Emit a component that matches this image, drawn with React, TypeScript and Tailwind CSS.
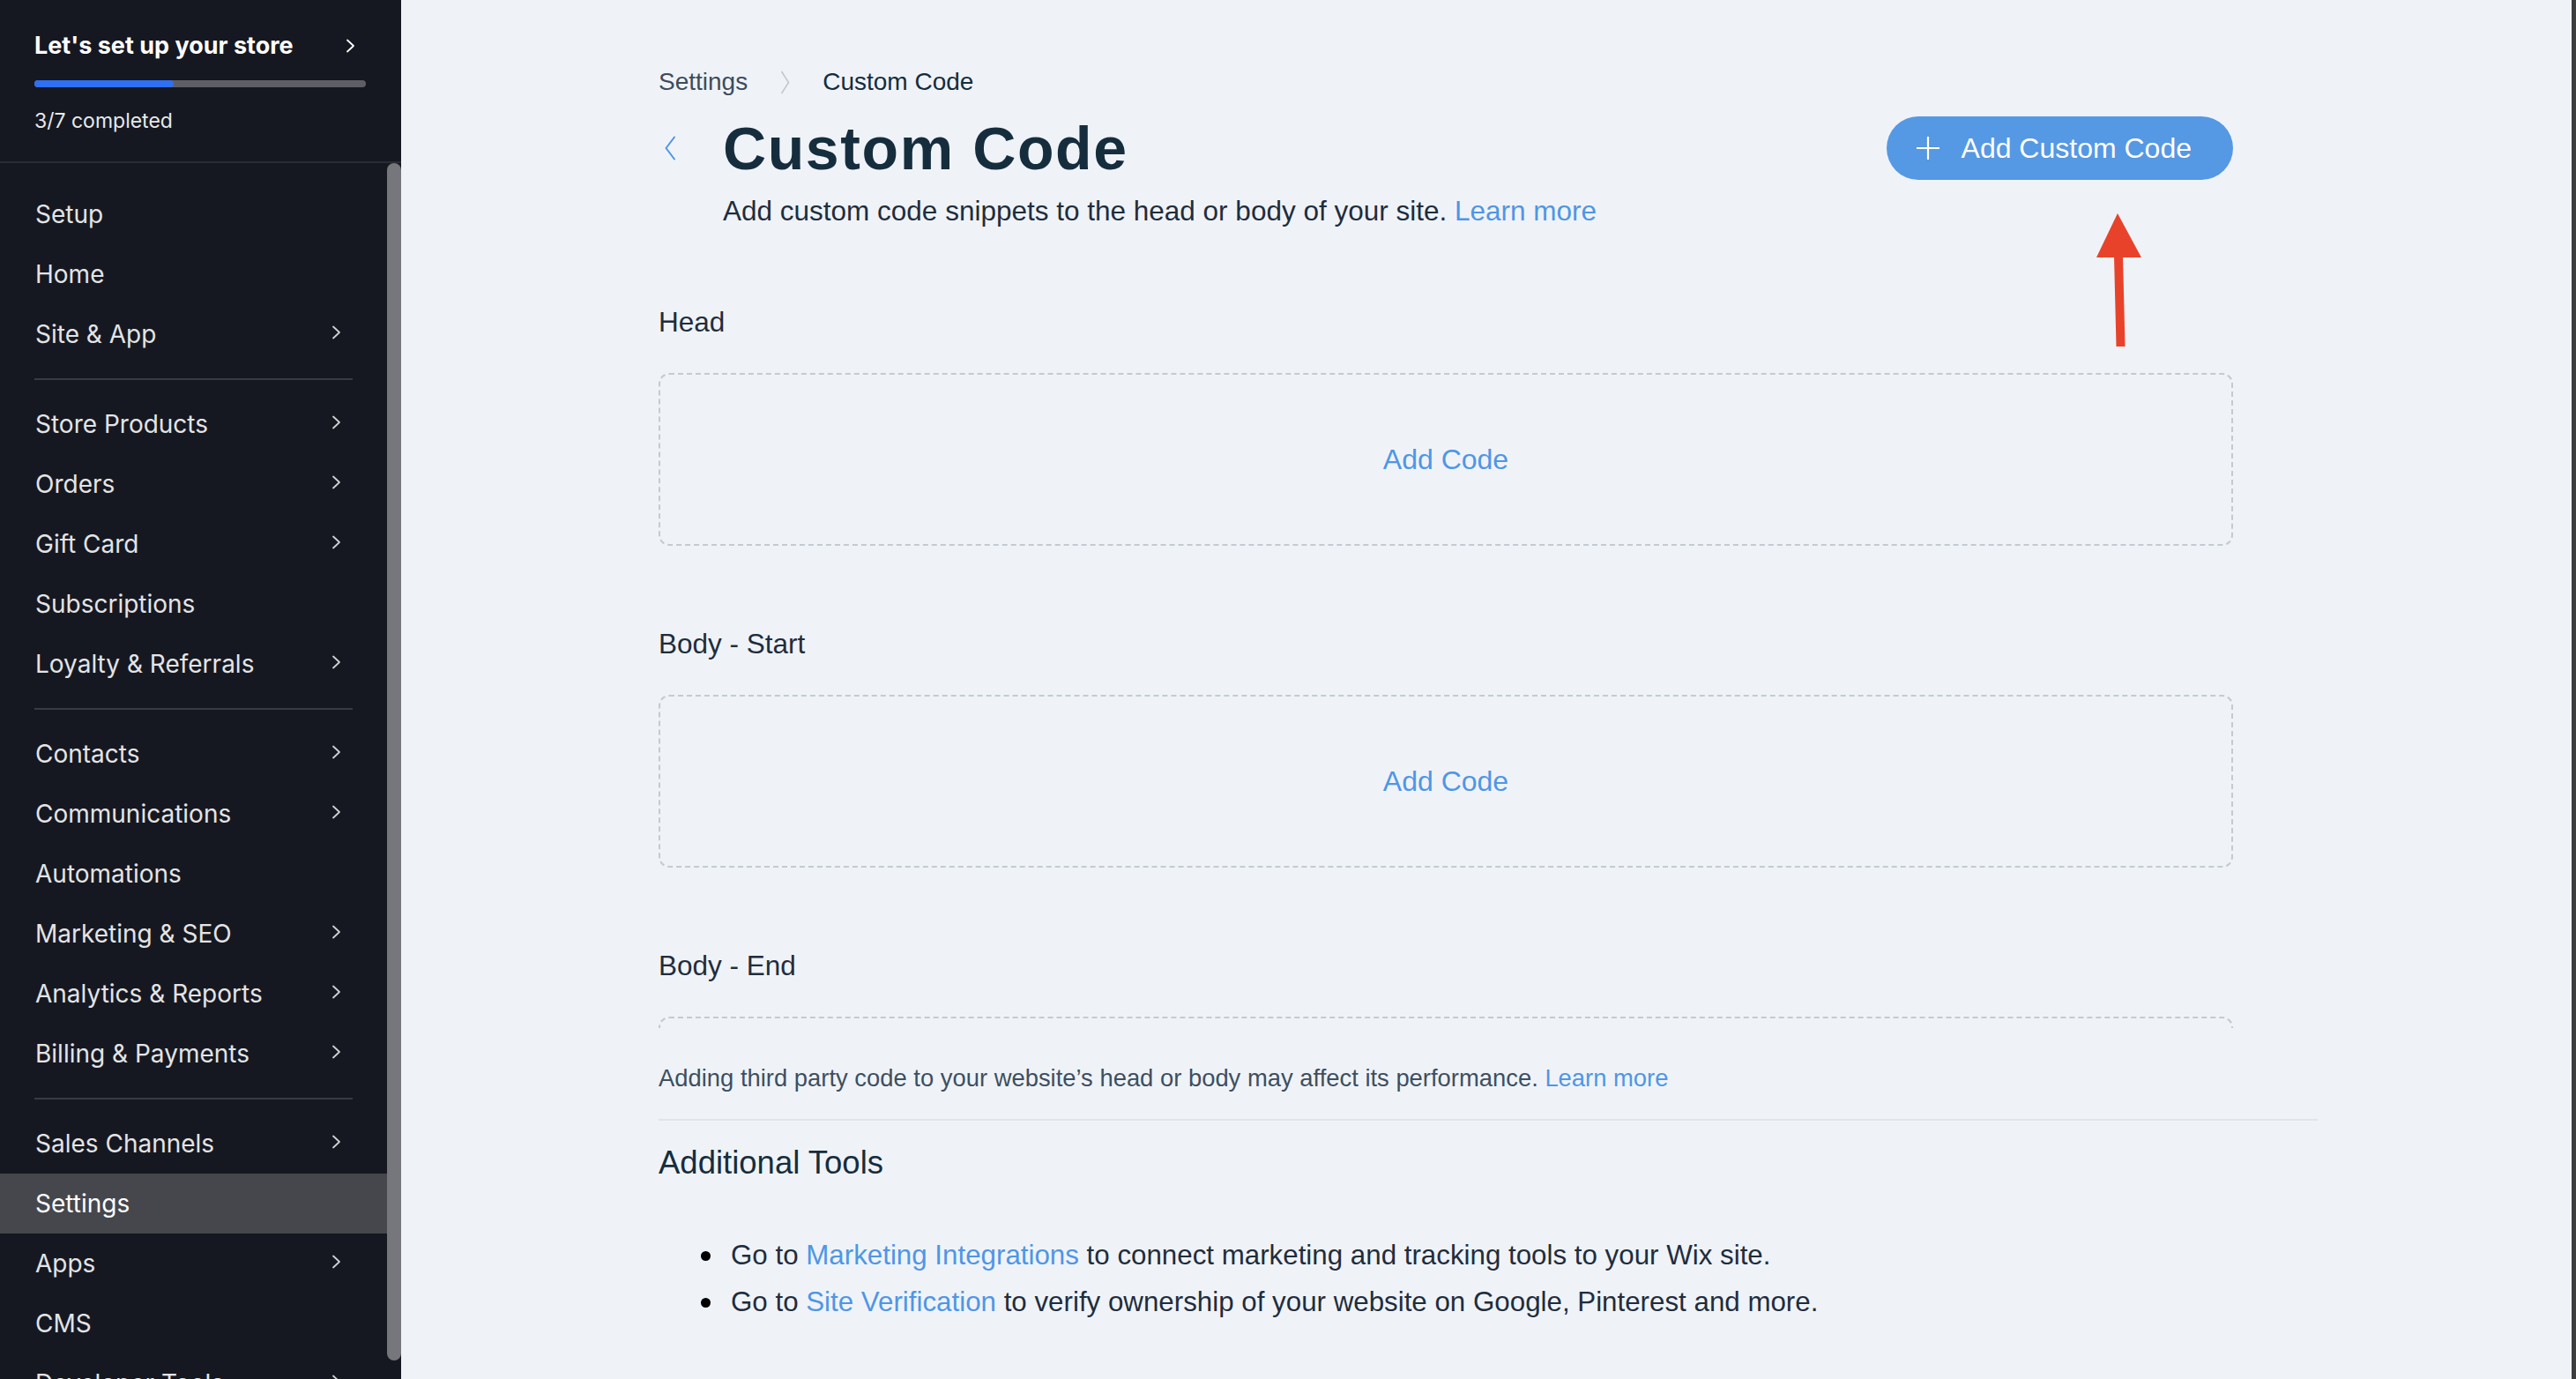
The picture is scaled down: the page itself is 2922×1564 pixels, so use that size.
import React from "react";

type NavItem = { label: string; arrow?: boolean; active?: boolean };

const navGroups: NavItem[][] = [
  [{ label: "Setup" }, { label: "Home" }, { label: "Site & App", arrow: true }],
  [
    { label: "Store Products", arrow: true },
    { label: "Orders", arrow: true },
    { label: "Gift Card", arrow: true },
    { label: "Subscriptions" },
    { label: "Loyalty & Referrals", arrow: true },
  ],
  [
    { label: "Contacts", arrow: true },
    { label: "Communications", arrow: true },
    { label: "Automations" },
    { label: "Marketing & SEO", arrow: true },
    { label: "Analytics & Reports", arrow: true },
    { label: "Billing & Payments", arrow: true },
  ],
  [
    { label: "Sales Channels", arrow: true },
    { label: "Settings", active: true },
    { label: "Apps", arrow: true },
    { label: "CMS" },
    { label: "Developer Tools", arrow: true },
  ],
];

function SmallChevron({ className = "" }: { className?: string }) {
  return (
    <svg width="11" height="16" viewBox="0 0 11 16" fill="none" className={className}>
      <path d="M2 1.5L9 8L2 14.5" stroke="currentColor" strokeWidth="1.8" strokeLinecap="round" strokeLinejoin="round" />
    </svg>
  );
}

function Sidebar() {
  return (
    <aside className="flex w-[455px] shrink-0 flex-col bg-[#161821] font-['Inter',sans-serif]">
      {/* Setup progress */}
      <div className="border-b-2 border-[#2a2d35] pb-[31px] pl-[39px] pr-[40px] pt-[34px]">
        <div className="flex h-[36px] items-center justify-between pr-[12px]">
          <span className="text-[27px] font-bold leading-[36px] text-white">Let's set up your store</span>
          <SmallChevron className="text-white" />
        </div>
        <div className="mt-[21px] h-[8px] rounded-full bg-[#5e5f65]">
          <div className="h-full w-[158px] rounded-full bg-[#2f6ff1]" />
        </div>
        <div className="mt-[23px] text-[23px] leading-[30px] text-[#e8e9eb]">3/7 completed</div>
      </div>

      {/* Menu + scrollbar */}
      <div className="flex min-h-0 flex-1">
        <nav className="min-w-0 flex-1 overflow-hidden pt-[24px]">
          {navGroups.map((group, gi) => (
            <div key={gi}>
              {gi > 0 && <div className="mx-[39px] my-[16px] h-[2px] bg-[#383b43]" />}
              {group.map((item) => (
                <div
                  key={item.label}
                  className={`flex h-[68px] items-center justify-between pl-[40px] pr-[52px] text-[28px] ${
                    item.active ? "bg-[#45474c] text-white" : "text-[#e3e4e6]"
                  }`}
                >
                  <span>{item.label}</span>
                  {item.arrow && <SmallChevron className="-mt-[4px] text-[#d0d1d4]" />}
                </div>
              ))}
            </div>
          ))}
        </nav>
        <div className="w-[16px] shrink-0">
          <div className="h-[1358px] rounded-full bg-[#76777c]" />
        </div>
      </div>
    </aside>
  );
}

function CodeSection({ title, first }: { title: string; first?: boolean }) {
  return (
    <section className={first ? "mt-[90px]" : "mt-[93px]"}>
      <h3 className="text-[31.5px] leading-[36px] text-[#1f2d3d]">{title}</h3>
      <div className="mt-[40px] flex h-[196px] shrink-0 items-center justify-center rounded-[12px] border-2 border-dashed border-[#c3cad2] text-[32px] text-[#4f96e6]">
        Add Code
      </div>
    </section>
  );
}

export default function App() {
  return (
    <div className="flex h-screen w-full overflow-hidden bg-[#eff3f8]">
      <Sidebar />

      <main className="flex min-w-0 flex-1 flex-col pl-[292px] font-['Liberation_Sans',Arial,Helvetica,sans-serif] text-[#1f2d3d]">
        {/* Scrollable page content */}
        <div className="flex h-[1166px] w-[1786px] shrink-0 flex-col overflow-hidden">
          <nav className="mt-[76px] flex items-center gap-[37px] text-[28px] leading-[34px]">
            <span className="text-[#3d4c5b]">Settings</span>
            <svg width="11" height="27" viewBox="0 0 11 27" fill="none">
              <path d="M1.5 1L9.5 13.5L1.5 26" stroke="#c0c6cd" strokeWidth="1.5" />
            </svg>
            <span className="text-[#162d3d]">Custom Code</span>
          </nav>

          <div className="mt-[18px] flex h-[80px] items-center justify-between">
            <div className="flex items-center">
              <div className="flex w-[73px] items-center pl-[6px]">
                <svg width="14" height="28" viewBox="0 0 14 28" fill="none">
                  <path d="M12 1.5L2.5 14L12 26.5" stroke="#4f96e6" strokeWidth="2" strokeLinecap="round" strokeLinejoin="round" />
                </svg>
              </div>
              <h1 className="text-[68px] font-bold leading-[80px] tracking-[1.6px] text-[#162d3d]">Custom Code</h1>
            </div>
            <div className="relative">
              <button className="flex h-[72px] items-center gap-[25px] rounded-full bg-[#5598e4] pl-[34px] pr-[47px] text-[32px] text-white">
                <svg width="26" height="26" viewBox="0 0 26 26" fill="none">
                  <path d="M13 0V26M0 13H26" stroke="white" strokeWidth="2.2" />
                </svg>
                Add Custom Code
              </button>
              {/* annotation arrow */}
              <svg
                className="absolute left-[235px] top-[108px]"
                width="58"
                height="155"
                viewBox="0 0 58 155"
              >
                <polygon points="27,2 3,52 54,52" fill="#e8432a" />
                <polygon points="23,50 33,50 35.5,153 25.5,153" fill="#e8432a" />
              </svg>
            </div>
          </div>

          <p className="mt-[13px] pl-[73px] text-[31.5px] leading-[36px] text-[#1f2d3d]">
            Add custom code snippets to the head or body of your site.{" "}
            <a className="text-[#4f96e6]">Learn more</a>
          </p>

          <CodeSection title="Head" first />
          <CodeSection title="Body - Start" />
          <CodeSection title="Body - End" />
        </div>

        {/* Footer info */}
        <div className="w-[1882px]">
          <p className="mt-[41px] text-[27.4px] leading-[32px] text-[#3e4f60]">
            Adding third party code to your website’s head or body may affect its performance.{" "}
            <a className="text-[#4f96e6]">Learn more</a>
          </p>
          <div className="mt-[30px] h-[2px] bg-[#dfe5eb]" />
          <h2 className="mt-[26px] text-[36.5px] leading-[44px] text-[#162d3d]">Additional Tools</h2>
          <ul className="mt-[57px] text-[31.3px] text-[#1f2d3d]">
            <li className="flex h-[53px] items-center gap-[23px] pl-[48px]">
              <span className="h-[11px] w-[11px] shrink-0 rounded-full bg-black" />
              <span>
                Go to <a className="text-[#4f96e6]">Marketing Integrations</a> to connect marketing and tracking tools to
                your Wix site.
              </span>
            </li>
            <li className="flex h-[53px] items-center gap-[23px] pl-[48px]">
              <span className="h-[11px] w-[11px] shrink-0 rounded-full bg-black" />
              <span>
                Go to <a className="text-[#4f96e6]">Site Verification</a> to verify ownership of your website on Google,
                Pinterest and more.
              </span>
            </li>
          </ul>
        </div>
      </main>

      <div className="w-[5px] shrink-0 bg-[#3d3d3d]" />
    </div>
  );
}
